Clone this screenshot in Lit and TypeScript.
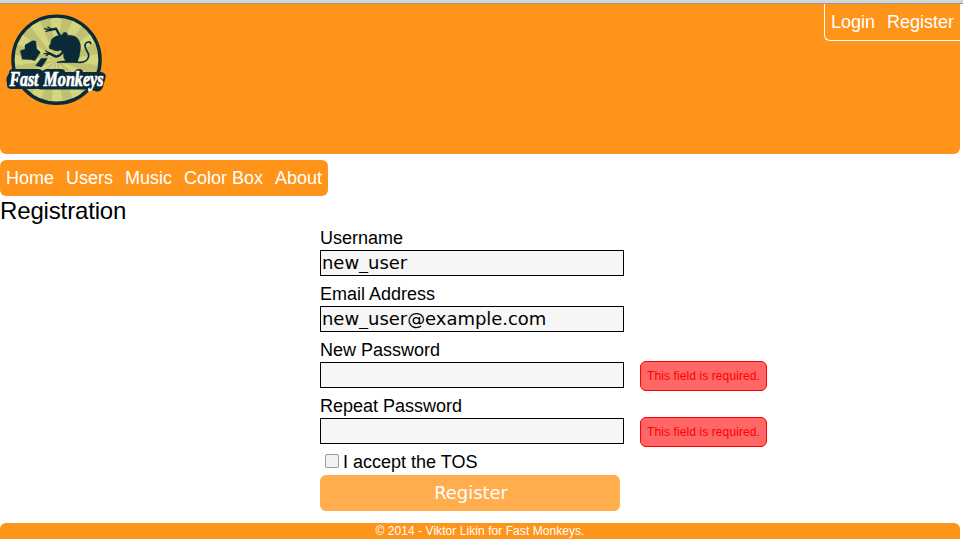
import { LitElement, html, css, svg, nothing } from "lit";
import { customElement, property } from "lit/decorators.js";

@customElement("monkey-logo")
class MonkeyLogo extends LitElement {
  static styles = css`
    :host { display: block; flex: none; width: 120px; height: 110px; }
    svg { display: block; overflow: visible; }
    .word {
      font: italic bold 20.5px "Liberation Serif", serif;
      fill: #fff;
      stroke: #fff;
      stroke-width: 0.7px;
    }
  `;

  render() {
    const rays = Array.from({ length: 12 }, (_, i) => {
      const a = (i * Math.PI) / 6 + 0.12;
      const b = a + Math.PI / 12;
      const p = (t: number) => `${(56.5 + 43 * Math.cos(t)).toFixed(2)} ${(60 + 43 * Math.sin(t)).toFixed(2)}`;
      return svg`<path d="M56.5 60L${p(a)}L${p(b)}Z" fill="#bfc070"/>`;
    });
    return html`<svg width="120" height="110" viewBox="0 4 120 110">
      <circle cx="56.5" cy="59.7" r="43.5" fill="#d3d57f"/>
      ${rays}
      <circle cx="56.5" cy="59.7" r="43.6" fill="none" stroke="#0b2a38" stroke-width="3.4"/>
      <g transform="scale(.33333)" fill="#0b2a38" stroke="#0b2a38" stroke-linecap="round" stroke-linejoin="round">
        <path d="M61 152L75 148L75 135L97 122L107 123L110 146L121 157L105 182L94 179L67 178Z"/>
        <path d="M123 175L143 175L125 202L106 197Z" stroke="none"/>
        <path d="M147 139L152 131L154 119Q164 106 187 104Q188 97 195 97Q203 97 203 106Q224 104 234 117Q244 130 241 150Q239 172 231 188H170Q170 185 180 184L196 182Q188 170 190 158L181 150Q172 155 162 151L149 146Z"/>
        <path d="M178 104L168 86L150 90" fill="none" stroke-width="7"/>
        <path d="M151 90L134 86M151 90L138 94M154 88L144 81" fill="none" stroke-width="4"/>
        <path d="M190 154Q177 172 166 169L148 160" fill="none" stroke-width="7"/>
        <path d="M149 160L132 161M149 160L137 153M149 160L139 167" fill="none" stroke-width="4"/>
        <path d="M228 186Q262 191 266 169Q267 162 259 150Q249 130 264 126Q272 125 272 131" fill="none" stroke-width="5"/>
      </g>
      <path d="M9 73Q9 69 13 69H38Q42 69 42 71L46 69H61Q65 69 65 72H74Q76 68.500 79 69Q83 69 83 72H101Q107 73 105.500 78L103 87Q100 93 95 91L90 89.500H41L38 89H11Q6 88.500 7 83Q5.500 79 7.500 76Z" fill="#0b2a38"/>
      <text class="word" x="9.500" y="86" textLength="29" lengthAdjust="spacingAndGlyphs">Fast</text>
      <text class="word" x="43.500" y="86" textLength="60" lengthAdjust="spacingAndGlyphs">Monkeys</text>
    </svg>`;
  }
}

@customElement("form-field")
class FormField extends LitElement {
  @property() label = "";
  @property() type = "text";
  @property() value = "";
  @property() error = "";

  static styles = css`
    :host { display: block; height: 56px; }
    label { display: block; height: 24px; line-height: 24px; }
    .row { display: flex; align-items: flex-start; gap: 16px; height: 26px; }
    input {
      box-sizing: border-box;
      flex: none;
      width: 304px;
      height: 26px;
      margin: 0;
      padding: 0 1px 2px;
      border: 1px solid #000;
      background: #f6f6f6;
      color: #000;
      font: 18px "DejaVu Sans", sans-serif;
      letter-spacing: -0.04px;
      outline: none;
    }
    .error {
      box-sizing: border-box;
      flex: none;
      width: 127px;
      height: 30px;
      margin-top: -1px;
      padding: 0 6px;
      border: 1px solid #f00;
      border-radius: 6px;
      background: #f66;
      color: #f00;
      font-size: 12px;
      letter-spacing: 0.1px;
      line-height: 28px;
      white-space: nowrap;
    }
  `;

  render() {
    return html`
      <label for="control">${this.label}</label>
      <div class="row">
        <input id="control" type=${this.type} .value=${this.value} />
        ${this.error ? html`<span class="error">${this.error}</span>` : nothing}
      </div>
    `;
  }
}

@customElement("app-root")
class AppRoot extends LitElement {
  static styles = css`
    :host {
      display: block;
      height: 542px;
      overflow: hidden;
      background: #fff;
      color: #000;
      font: 18px "Liberation Sans", Arial, sans-serif;
    }
    a { color: #fff; text-decoration: none; }
    .chrome { box-sizing: border-box; height: 4px; background: #d6d6d6; border-bottom: 1px solid #999; }
    .page { width: 960px; }
    header {
      display: flex;
      justify-content: space-between;
      align-items: flex-start;
      height: 150px;
      border-radius: 0 0 6px 6px;
      background: #ff941a;
    }
    .account, nav { display: flex; gap: 12px; padding: 0 6px; line-height: 36px; }
    .account { height: 36px; border: solid #fff; border-width: 0 0 1px 1px; border-bottom-left-radius: 6px; }
    nav { width: fit-content; height: 36px; margin-top: 6px; border-radius: 6px; background: #ff941a; white-space: nowrap; }
    h1 { margin: 0; height: 30px; font-size: 24px; font-weight: normal; line-height: 30px; letter-spacing: -0.15px; }
    form { display: block; margin-left: 320px; }
    .tos { display: flex; align-items: flex-start; height: 25px; line-height: 25px; }
    .tos input {
      appearance: none;
      box-sizing: border-box;
      width: 14px;
      height: 14px;
      margin: 4px 4px 0 5px;
      border: 1px solid #999;
      border-radius: 2px;
      background: #f2f2f2;
    }
    button {
      display: block;
      width: 300px;
      height: 36px;
      padding: 0 0 2px 2px;
      border: 0;
      border-radius: 6px;
      background: #ffad4d;
      color: #fff;
      font: 18px "DejaVu Sans", sans-serif;
      letter-spacing: -0.08px;
    }
    footer {
      height: 16px;
      margin-top: 12px;
      border-radius: 6px 6px 0 0;
      background: #ff941a;
      color: #fff;
      font-size: 12px;
      letter-spacing: 0.06px;
      line-height: 16px;
      text-align: center;
    }
  `;

  render() {
    const required = "This field is required.";
    return html`
      <div class="chrome"></div>
      <div class="page">
        <header>
          <monkey-logo></monkey-logo>
          <div class="account"><a href="#">Login</a><a href="#">Register</a></div>
        </header>
        <nav>${["Home", "Users", "Music", "Color Box", "About"].map((t) => html`<a href="#">${t}</a>`)}</nav>
        <h1>Registration</h1>
        <form>
          <form-field label="Username" value="new_user"></form-field>
          <form-field label="Email Address" value="new_user@example.com"></form-field>
          <form-field label="New Password" type="password" error=${required}></form-field>
          <form-field label="Repeat Password" type="password" error=${required}></form-field>
          <label class="tos"><input type="checkbox" />I accept the TOS</label>
          <button type="button">Register</button>
        </form>
        <footer>© 2014 - Viktor Likin for Fast Monkeys.</footer>
      </div>
    `;
  }
}
